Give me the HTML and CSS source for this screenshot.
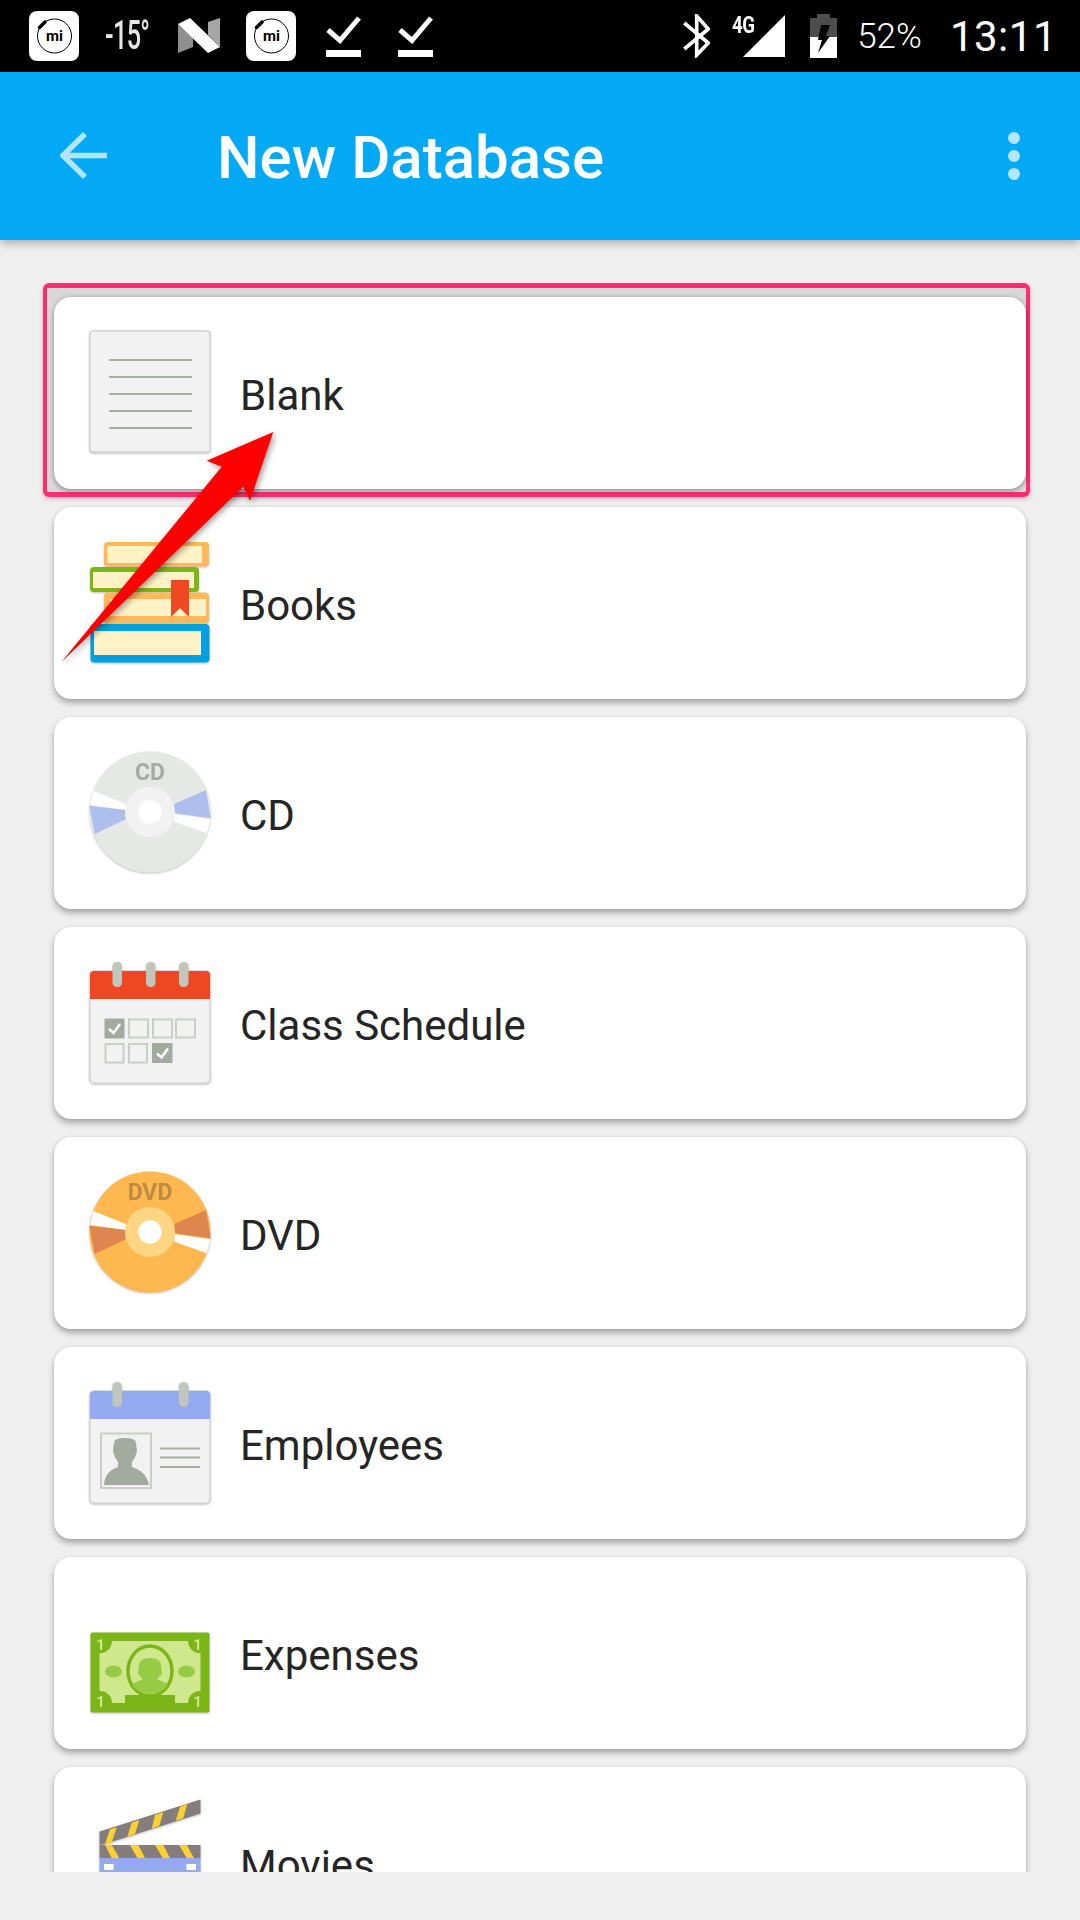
FILE: index.html
```html
<!DOCTYPE html>
<html lang="en">
<head>
    <meta charset="UTF-8">
    <meta name="viewport" content="width=device-width, initial-scale=1.0">
    <title>New Database</title>
    <link rel="stylesheet" href="styles.css">
</head>
<body>
<div class="page">
    <div class="statusbar">
        <svg class="st-mi" width="50" height="50" viewBox="0 0 50 50">
            <rect width="50" height="50" rx="8" fill="#fff"/>
            <circle cx="25.500" cy="25" r="17" fill="none" stroke="#000" stroke-width="1"/>
            <path d="M10.500 16.500 L16 11" stroke="#000" stroke-width="3.500" stroke-linecap="round"/>
            <text x="25.500" y="30" class="mi-text">mi</text>
        </svg>
        <div class="st-temp"><span>-15°</span></div>
        <svg class="st-n" width="42" height="36" viewBox="0 0 42 36">
            <path d="M0 6 L0 35 L15 29 L15 20Z" fill="#8f8f8f"/>
            <path d="M30 4 L42 0 L42 29 L30 17Z" fill="#a6a6a6"/>
            <path d="M0 6 L12 0 L42 29 L30 35Z" fill="#fff"/>
        </svg>
        <svg class="st-mi2" width="50" height="50" viewBox="0 0 50 50">
            <rect width="50" height="50" rx="8" fill="#fff"/>
            <circle cx="25.500" cy="25" r="17" fill="none" stroke="#000" stroke-width="1"/>
            <path d="M10.500 16.500 L16 11" stroke="#000" stroke-width="3.500" stroke-linecap="round"/>
            <text x="25.500" y="30" class="mi-text">mi</text>
        </svg>
        <svg class="st-check1" width="35" height="42" viewBox="0 0 35 42">
            <path d="M2 15 L14 25.500 L33 3" fill="none" stroke="#fff" stroke-width="5"/>
            <rect y="35" width="35" height="7" fill="#fff"/>
        </svg>
        <svg class="st-check2" width="35" height="42" viewBox="0 0 35 42">
            <path d="M2 15 L14 25.500 L33 3" fill="none" stroke="#fff" stroke-width="5"/>
            <rect y="35" width="35" height="7" fill="#fff"/>
        </svg>

        <svg class="st-bt" width="27" height="44" viewBox="0 0 27 44">
            <path d="M1.300 9 L25.300 29 L13.700 41 L13.700 2 L25.300 15 L1.300 35" fill="none" stroke="#fff" stroke-width="3.600"/>
        </svg>
        <div class="st-signal">
            <svg width="42" height="42" viewBox="0 0 42 42"><path d="M42 0 L42 42 L0 42Z" fill="#fff"/></svg>
            <span class="st-4g">4G</span>
        </div>
        <svg class="st-batt" width="27" height="44" viewBox="0 0 27 44">
            <path d="M7 0 H20 V4 H27 V44 H0 V4 H7Z" fill="#4d4d4d"/>
            <rect y="23" width="27" height="21" fill="#fff"/>
            <path d="M11 11 H20 L16 22 H20 L8 39 L12 26 H8Z" fill="#000"/>
        </svg>
        <span class="st-pct">52%</span>
        <span class="st-time">13:11</span>
    </div>

    <div class="toolbar">
        <svg class="back" width="48" height="50" viewBox="0 0 48 50">
            <path d="M47 24.500 H5 M25 3 L3 24.500 L25 46" fill="none" stroke="#b3e5fc" stroke-width="5.500"/>
        </svg>
        <h1 class="title">New Database</h1>
        <div class="more"><i></i><i></i><i></i></div>
    </div>

    <div class="list">
        <div class="selected">
            <div class="card">
                <svg class="icon" width="132" height="132" viewBox="0 0 132 132">
                    <rect x="6" y="4" width="120" height="121" rx="3" fill="#f2f2f2" stroke="#d6d6d6" stroke-width="1.500"/>
                    <path d="M25 33 H108 M25 50 H108 M25 67 H108 M25 84 H108 M25 101 H108" stroke="#a8aea4" stroke-width="2"/>
                </svg>
                <span class="label">Blank</span>
            </div>
        </div>

        <div class="card">
            <svg class="icon" width="132" height="132" viewBox="0 0 132 132">
                <rect x="20" y="5" width="105" height="24.500" rx="4" fill="#ffb85a"/>
                <rect x="23.500" y="9" width="94.500" height="17" fill="#fff2c6"/>
                <rect x="6" y="30" width="109" height="25" rx="4" fill="#7cb518"/>
                <rect x="9" y="35" width="101" height="16" fill="#fff2c6"/>
                <rect x="20" y="55.500" width="105" height="31" rx="4" fill="#ffb85a"/>
                <rect x="26" y="62" width="96" height="17" fill="#fff2c6"/>
                <path d="M87 43 H105 V80 L96 71 L87 80Z" fill="#ee4722"/>
                <rect x="6.500" y="87" width="119" height="38.500" rx="4" fill="#039fe0"/>
                <rect x="10" y="94" width="107" height="24" fill="#fff2c6"/>
            </svg>
            <span class="label">Books</span>
        </div>

        <div class="card">
            <svg class="icon" width="132" height="132" viewBox="0 0 132 132">
                <circle cx="66" cy="65" r="60.500" fill="#e6e8e6"/>
                <path d="M9.300 44 L41.700 57 V63 L6 58Z M126.700 72.300 L122.700 86.300 L90.300 74.700 V67Z" fill="#fff"/>
                <path d="M5.300 58.700 L41.700 63 V72.300 L10.700 87Z M122 43 L126.700 71.300 L90.300 66.300 V57Z" fill="#aebfee"/>
                <circle cx="66" cy="65" r="25" fill="#f2f2f2"/>
                <circle cx="66" cy="65" r="11.700" fill="#fff"/>
                <text x="66" y="33" class="disc-text cd">CD</text>
            </svg>
            <span class="label">CD</span>
        </div>

        <div class="card">
            <svg class="icon" width="132" height="132" viewBox="0 0 132 132">
                <rect x="6" y="14" width="120" height="112" rx="4" fill="#f2f2f2" stroke="#d6d6d6" stroke-width="1.500"/>
                <path d="M6 42 V18 Q6 14 10 14 H122 Q126 14 126 18 V42Z" fill="#ee4722"/>
                <rect x="28.500" y="5" width="9.500" height="25" rx="4.500" fill="#c0c6bc"/>
                <rect x="62" y="5" width="9.500" height="25" rx="4.500" fill="#c0c6bc"/>
                <rect x="95" y="5" width="9.500" height="25" rx="4.500" fill="#c0c6bc"/>
                <rect x="20.500" y="61.500" width="20" height="20" fill="#a3aaa0"/>
                <path d="M25 72 L29.500 76 L36 67" fill="none" stroke="#fff" stroke-width="2.500"/>
                <g fill="none" stroke="#c9cec6" stroke-width="2">
                    <rect x="45" y="62.500" width="19" height="18"/>
                    <rect x="69" y="62.500" width="19" height="18"/>
                    <rect x="92" y="62.500" width="19" height="18"/>
                    <rect x="21.500" y="87" width="18" height="18.500"/>
                    <rect x="45" y="87" width="18" height="18.500"/>
                </g>
                <rect x="68" y="86" width="20.500" height="20" fill="#a3aaa0"/>
                <path d="M73 96.500 L77.500 100.500 L84 91.500" fill="none" stroke="#fff" stroke-width="2.500"/>
            </svg>
            <span class="label">Class Schedule</span>
        </div>

        <div class="card">
            <svg class="icon" width="132" height="132" viewBox="0 0 132 132">
                <circle cx="66" cy="65" r="60.500" fill="#ffb74f"/>
                <path d="M9.300 44 L41.700 57 V63 L6 58Z M126.700 72.300 L122.700 86.300 L90.300 74.700 V67Z" fill="#fff"/>
                <path d="M5.300 58.700 L41.700 63 V72.300 L10.700 87Z M122 43 L126.700 71.300 L90.300 66.300 V57Z" fill="#dd8650"/>
                <circle cx="66" cy="65" r="25" fill="#ffd584"/>
                <circle cx="66" cy="65" r="11.700" fill="#fff"/>
                <text x="66" y="33" class="disc-text dvd">DVD</text>
            </svg>
            <span class="label">DVD</span>
        </div>

        <div class="card">
            <svg class="icon" width="132" height="132" viewBox="0 0 132 132">
                <rect x="6" y="14" width="120" height="112" rx="4" fill="#f2f2f2" stroke="#d6d6d6" stroke-width="1.500"/>
                <path d="M6 42 V18 Q6 14 10 14 H122 Q126 14 126 18 V42Z" fill="#94aaf0"/>
                <rect x="28.500" y="5" width="9.500" height="25" rx="4.500" fill="#c0c6bc"/>
                <rect x="95" y="5" width="9.500" height="25" rx="4.500" fill="#c0c6bc"/>
                <rect x="17" y="56.500" width="50" height="54.500" fill="none" stroke="#c9cec6" stroke-width="2"/>
                <path d="M30 66 Q30 61 41 61 Q52 61 52 66 L53 74 Q52 80 48 85 V90 Q62 94 65 108 H20 Q21 94 34 90 V85 Q30 80 29 74Z" fill="#a3aaa0"/>
                <path d="M76 71.500 H116 M76 80.500 H116 M76 90 H116" stroke="#a8aea4" stroke-width="2"/>
            </svg>
            <span class="label">Employees</span>
        </div>

        <div class="card">
            <svg class="icon" width="132" height="132" viewBox="0 0 132 132">
                <rect x="6.500" y="45.500" width="119" height="80" rx="2" fill="#7cb518"/>
                <path d="M28 54 H104 A12 12 0 0 0 116.500 66 V104 A12 12 0 0 0 104 116 H91 V108 H41 V116 H28 A12 12 0 0 0 15.500 104 V66 A12 12 0 0 0 28 54Z" fill="#cfe88d"/>
                <ellipse cx="29.500" cy="84.500" rx="8.500" ry="6" fill="#97cb45"/>
                <ellipse cx="102.500" cy="84.500" rx="8.500" ry="6" fill="#97cb45"/>
                <ellipse cx="66" cy="84" rx="22" ry="25" fill="#cfe88d" stroke="#7cb518" stroke-width="3.500"/>
                <path d="M55 79 Q55 71 66 71 Q77 71 77 79 L78 87 L73 92 L84 97 Q80 106 66 107 Q52 106 48 97 L59 92 L54 87Z" fill="#97cb45"/>
                <text x="16.500" y="63" class="bill-text">1</text>
                <text x="113.500" y="63" class="bill-text">1</text>
                <text x="16.500" y="120" class="bill-text">1</text>
                <text x="113.500" y="120" class="bill-text">1</text>
            </svg>
            <span class="label">Expenses</span>
        </div>

        <div class="card">
            <svg class="icon" width="132" height="132" viewBox="0 0 132 132">
                <path d="M15.500 34.500 L116.500 2.500 V16.500 L21 47 L15.500 48Z" fill="#857c7c"/>
                <path d="M26 32.300 L32.700 30.300 L27.700 45.700 L21 47Z M47.700 25.700 L55.300 23 L51 37 L43.300 39.700Z M71 18 L79.300 15.300 L75.300 29 L67.700 31.700Z M96 9.700 L103.300 7 L99.300 21.300 L91.700 23.700Z" fill="#fdd032"/>
                <rect x="15.500" y="48" width="101" height="14" fill="#857c7c"/>
                <path d="M21 48 H27.700 L35.300 61 H27.700Z M46 48 H54.300 L61 61 H53.300Z M71 48 H79.300 L86 61 H78.700Z M95 48 H102.700 L110 61 H102.700Z" fill="#fdd032"/>
                <rect x="15.500" y="61" width="101" height="65" fill="#94aaf0"/>
                <rect x="20" y="67" width="9.500" height="6" fill="#fff"/>
                <rect x="102.500" y="67" width="9.500" height="6" fill="#fff"/>
            </svg>
            <span class="label">Movies</span>
        </div>
    </div>

    <!-- annotation arrow drawn over the list -->
    <svg class="arrow" width="220" height="240" viewBox="55 430 220 240">
        <path d="M273.300 432 L206.700 460.700 L221.700 466.700 L61 662.500 L243.300 486.700 L250 500.700Z" fill="#ff0000"/>
    </svg>
</div>
</body>
</html>
```

FILE: styles.css
```css
* {
    box-sizing: border-box;
}
html, body {
    margin: 0;
    padding: 0;
}
body {
    font-family: Roboto, "Noto Sans", sans-serif;
    background-color: #efefef;
}
.page {
    position: relative;
    width: 1080px;
    height: 1920px;
    overflow: hidden;
    background-color: #efefef;
}

/* status bar */
.statusbar {
    display: flex;
    align-items: center;
    height: 72px;
    background-color: #000;
    color: #fff;
    padding-right: 23px;
}
.st-mi { margin-left: 29px; }
.st-temp {
    margin-left: 26px;
    width: 44px;
    height: 30px;
    font-size: 40px;
    font-weight: 500;
    line-height: 30px;
}
.st-temp span {
    display: inline-block;
    transform: scaleX(0.63);
    transform-origin: left center;
    white-space: nowrap;
    letter-spacing: -1px;
    color: #e6e6e6;
}
.st-n { margin-left: 29px; }
.st-mi2 { margin-left: 26px; }
.st-check1 { margin-left: 30px; }
.st-check2 { margin-left: 37px; }
.mi-text {
    font-family: Roboto, sans-serif;
    font-weight: 700;
    font-size: 15px;
    text-anchor: middle;
    fill: #000;
}
.st-bt { margin-left: auto; }
.st-signal {
    position: relative;
    width: 42px;
    height: 42px;
    margin-left: 33px;
}
.st-signal svg {
    display: block;
}
.st-4g {
    position: absolute;
    left: -11px;
    top: -1px;
    font-size: 24px;
    font-weight: 700;
    line-height: 22px;
    letter-spacing: -0.5px;
    transform: scaleX(0.78);
    transform-origin: left center;
}
.st-batt { margin-left: 25px; }
.st-pct {
    margin-left: 20px;
    font-size: 35px;
    font-weight: 300;
}
.st-time {
    margin-left: 28px;
    font-size: 42px;
    font-weight: 400;
    letter-spacing: 0.5px;
}

/* toolbar */
.toolbar {
    position: relative;
    z-index: 2;
    display: flex;
    align-items: center;
    height: 168px;
    background-color: #03a9f5;
    box-shadow: 0 3px 9px rgba(0, 0, 0, 0.3);
}
.back {
    margin-left: 60px;
}
.title {
    margin: 0 0 0 109px;
    font-size: 60px;
    font-weight: 500;
    color: #fff;
    position: relative;
    top: 1px;
}
.more {
    display: flex;
    flex-direction: column;
    gap: 6px;
    margin-left: auto;
    margin-right: 60px;
}
.more i {
    display: block;
    width: 12px;
    height: 12px;
    border-radius: 50%;
    background-color: #b3e5fc;
}

/* list */
.list {
    display: flex;
    flex-direction: column;
    gap: 18px;
    height: 1632px;
    padding: 57px 54px 0;
    overflow: hidden;
}
.card {
    display: flex;
    align-items: center;
    flex: none;
    height: 192px;
    padding-left: 30px;
    background-color: #fff;
    border-radius: 17px;
    box-shadow: 0 4px 6px rgba(0, 0, 0, 0.3), 0 0 3px rgba(0, 0, 0, 0.08);
}
.selected {
    flex: none;
    margin: -14px -4px -8px -11px;
    padding: 9px 0 3px 7px;
    border: 5px solid #ff2d6f;
    border-right-width: 4px;
    border-left-width: 4px;
    border-radius: 6px;
    background-color: #d8d8d8;
    box-shadow: 0 2px 4px rgba(0, 0, 0, 0.2);
}
.selected .card {
    height: 192px;
    box-shadow: 0 0 5px rgba(0, 0, 0, 0.22), 0 3px 4px rgba(0, 0, 0, 0.18);
}
.icon {
    flex: none;
    margin-right: 24px;
    filter: drop-shadow(0 1px 1px rgba(0, 0, 0, 0.25));
}
.label {
    margin-top: 4px;
    font-size: 42px;
    color: #252525;
}
.disc-text {
    font-family: Roboto, sans-serif;
    font-weight: 700;
    font-size: 23px;
    text-anchor: middle;
}
.cd { fill: #a8aaa6; }
.dvd { fill: #bf8a42; }
.bill-text {
    font-family: Roboto, sans-serif;
    font-weight: 700;
    font-size: 15px;
    text-anchor: middle;
    fill: #cfe88d;
}

/* arrow on top of everything */
.arrow {
    position: absolute;
    left: 55px;
    top: 430px;
    filter: drop-shadow(2px 2px 3px rgba(0, 0, 0, 0.4));
}
```
